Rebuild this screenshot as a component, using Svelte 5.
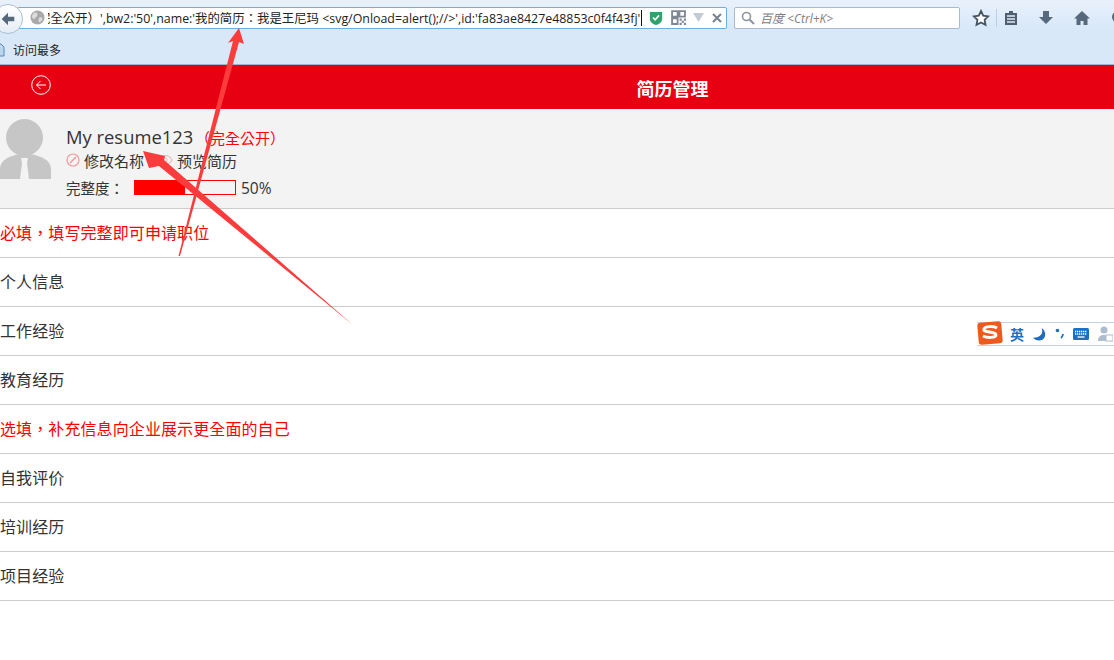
<script>
  const required = ['个人信息', '工作经验', '教育经历'];
  const optional = ['自我评价', '培训经历', '项目经验'];
  let percent = 50;
</script>

<div class="page">
  <div class="browser">
    <div class="toolbar">
      <div class="back">
        <svg viewBox="0 0 20 20" width="18" height="18"><path d="M10 3 3 10l7 7v-4.500h7v-5h-7z" fill="#55687c"/></svg>
      </div>
      <div class="urlbar">
        <svg class="globe" viewBox="0 0 16 16" width="15" height="15"><circle cx="8" cy="8" r="7.500" fill="#a9a9a9"/><path d="M4 3c2-1 4 0 4 2S6 7 5 9 2 8 2 6zM10 8c2-1 4 0 3 2s-2 3-3 3-1-4 0-5z" fill="#dcdcdc"/></svg>
        <div class="url"><span>完全公开）',bw2:'50',name:'我的简历：我是王尼玛 &lt;svg/Onload=alert();//&gt;',id:'fa83ae8427e48853c0f4f43fj'</span></div>
        <i class="caret"></i>
        <svg class="shield" viewBox="0 0 16 18" width="14" height="16"><path d="M1 2h14v8c0 4-4 6-7 7-3-1-7-3-7-7z" fill="#2fa36b"/><path d="M4.500 8.500 7 11l4.500-5" stroke="#fff" stroke-width="1.800" fill="none"/></svg>
        <svg class="qr" viewBox="0 0 14 14" width="15" height="15"><path d="M0 0h6v6H0zM8 0h6v6H8zM0 8h6v6H0z" fill="none" stroke="#7d8894" stroke-width="2" transform="translate(1 1) scale(.86)"/><path d="M8 8h2v2H8zM12 8h2v2h-2zM10 10h2v2h-2zM8 12h2v2H8zM12 12h2v2h-2z" fill="#7d8894"/></svg>
        <svg class="drop" viewBox="0 0 10 8" width="11" height="9"><path d="M0 0h10L5 8z" fill="#c3ccd5"/></svg>
        <svg class="close" viewBox="0 0 10 10" width="10" height="10"><path d="m1 1 8 8M9 1 1 9" stroke="#76828f" stroke-width="2"/></svg>
      </div>
      <div class="search">
        <svg viewBox="0 0 14 14" width="14" height="14"><circle cx="5.500" cy="5.500" r="4" fill="none" stroke="#8d959e" stroke-width="1.600"/><path d="m8.500 8.500 4.500 4.500" stroke="#8d959e" stroke-width="2"/></svg>
        <span>百度 &lt;Ctrl+K&gt;</span>
      </div>
      <div class="tools">
        <svg viewBox="0 0 18 18" width="18" height="18"><path d="m9 2 2.200 4.600 5 .7-3.600 3.500.9 5L9 13.400 4.500 15.800l.9-5L1.800 7.300l5-.7z" fill="#fff" stroke="#45525f" stroke-width="1.800"/></svg>
        <i class="sep"></i>
        <svg viewBox="0 0 16 16" width="16" height="16"><path d="M2 3h12v12H2z" fill="#4f5f6f"/><path d="M6 1h4v3H6z" fill="#4f5f6f"/><path d="M4 6h8M4 9h8M4 12h8" stroke="#dfeaf6" stroke-width="1.300"/></svg>
        <svg class="gap-l" viewBox="0 0 16 16" width="16" height="16"><path d="M5 1h6v6h4l-7 7-7-7h4z" fill="#55687c"/></svg>
        <svg class="gap-l" viewBox="0 0 18 16" width="18" height="16"><path d="M9 1 1 8.500h2.500V15h4v-4h3v4h4V8.500H17z" fill="#55687c"/></svg>
        <svg class="gap-l" viewBox="0 0 16 16" width="16" height="16"><circle cx="8" cy="7" r="6" fill="#55687c"/><path d="M5 12v4l4-3z" fill="#55687c"/></svg>
      </div>
    </div>
    <div class="bookmarks">
      <svg viewBox="0 0 12 14" width="12" height="14"><path d="M0 1h7l3 3v9H0z" fill="#bcd6ee" stroke="#5b87b3"/></svg>
      <span>访问最多</span>
    </div>
  </div>

  <header class="title">
    <svg class="return" viewBox="0 0 20 20" width="20" height="20"><circle cx="10" cy="10" r="9.300" fill="none" stroke="#fff" stroke-width="1"/><path d="M15 10H5.500M9.500 6l-4 4 4 4" fill="none" stroke="#fff" stroke-width="1"/></svg>
    <h1>简历管理</h1>
  </header>

  <section class="profile">
    <svg class="avatar" viewBox="0 0 52 60" width="52" height="60">
      <circle cx="24.500" cy="18.500" r="18.500" fill="#c6c6c6"/>
      <path d="M0 60V50c0-9 9-13 20-15h10c11 2 21 6 21 15v10z" fill="#c6c6c6"/>
      <path d="M21 39h7l-1 5 2 16h-9l2-16z" fill="#f3f3f3"/>
    </svg>
    <div class="info">
      <div class="name">My resume123 <span class="public">（完全公开）</span></div>
      <div class="actions">
        <span class="action">
          <svg viewBox="0 0 14 14" width="14" height="14"><circle cx="7" cy="7" r="6" fill="none" stroke="#f29a9a" stroke-width="1.200"/><path d="m4 10 6-6" stroke="#f29a9a" stroke-width="1.500"/></svg>
          修改名称
        </span>
        <span class="action">
          <svg viewBox="0 0 16 12" width="16" height="12"><path d="M1 6c3-6 11-6 14 0-3 6-11 6-14 0z" fill="none" stroke="#f0b8b8" stroke-width="1.200"/><circle cx="8" cy="6" r="2.200" fill="none" stroke="#f0b8b8"/></svg>
          预览简历
        </span>
      </div>
      <div class="progress">
        <span class="label">完整度：</span>
        <div class="bar"><div class="fill" style="width: {percent}%"></div></div>
        <span class="percent">{percent}%</span>
      </div>
    </div>
  </section>

  <div class="row notice">必填，填写完整即可申请职位</div>
  {#each required as item}
    <div class="row">{item}</div>
  {/each}
  <div class="row notice">选填，补充信息向企业展示更全面的自己</div>
  {#each optional as item}
    <div class="row">{item}</div>
  {/each}

  <div class="ime">
    <svg class="ime-logo" viewBox="0 0 28 26" width="28" height="26">
      <rect x="2" y="2" width="24" height="22" rx="3" fill="#ee5a1e" transform="rotate(-5 14 13)"/>
      <path d="M21 8c-3-2-12-2-13 1-1 4 12 2 12 6 0 3-9 3-13 1" fill="none" stroke="#fff" stroke-width="3"/>
    </svg>
    <span class="ime-text">英</span>
    <svg viewBox="0 0 14 14" width="15" height="15"><path d="M9 1c2 5-1 9-8 9 2 3 9 4 11-1 1-3 0-6-3-8z" fill="#1e6fc0"/></svg>
    <svg viewBox="0 0 10 14" width="10" height="14"><circle cx="2.500" cy="3.500" r="1.800" fill="#1e6fc0"/><path d="M8 7c0 2-1 3-2 4" stroke="#1e6fc0" stroke-width="1.800" fill="none"/></svg>
    <svg viewBox="0 0 16 12" width="16" height="12"><rect width="16" height="12" rx="1.500" fill="#1e6fc0"/><path d="M2 3.500h12M2 6h12" stroke="#fff" stroke-width="1.500" stroke-dasharray="1.300 .7"/><path d="M4.500 9h7" stroke="#fff" stroke-width="1.300"/></svg>
    <svg viewBox="0 0 16 16" width="16" height="16"><circle cx="7" cy="4" r="3.500" fill="#aebccd"/><path d="M1 15c0-5 3-6 6-6s4 1 4 2v4z" fill="#aebccd"/><rect x="9" y="9" width="7" height="6" fill="#fff" stroke="#aebccd"/></svg>
  </div>

  <!-- annotations drawn on top of the shot -->
  <svg class="marks" viewBox="0 0 1114 660" width="1114" height="660">
    <path d="M178.500 256 233 41l-5 2 11-15 5 16-5-2L180 256z" fill="#fb3c3c"/>
    <path d="M353 325 159 166l-10 2-6-17 22 5-1 4z" fill="#fb3c3c"/>
  </svg>
</div>

<style>
  :global(body) {
    margin: 0;
    background: #fff;
  }

  .page {
    position: relative;
    width: 1114px;
    height: 660px;
    overflow: hidden;
    font-family: "Open Sans", "Noto Sans CJK TC", sans-serif;
    color: #333;
  }

  .browser {
    height: 64px;
    border-bottom: 1px solid #9fb4c8;
    background: linear-gradient(#e9f1fb, #d8e8f8 45%);
  }

  .toolbar {
    display: flex;
    align-items: center;
    height: 36px;
  }

  .back {
    flex: none;
    display: flex;
    align-items: center;
    justify-content: center;
    width: 28px;
    height: 28px;
    margin: 1px -6px 0 -7px;
    border: 1px solid #a9bfd4;
    border-radius: 50%;
    background: linear-gradient(#fff, #e6edf5);
    position: relative;
    z-index: 1;
  }

  .urlbar {
    flex: none;
    display: flex;
    align-items: center;
    width: 710px;
    height: 22px;
    margin-top: -1px;
    padding-left: 12px;
    box-sizing: border-box;
    border: 1px solid #68b0ec;
    border-radius: 2px;
    background: #fff;
    font-size: 12.4px;
    color: #222;
    overflow: hidden;
  }

  .globe { flex: none; margin-right: 3px; }

  .url {
    flex: none;
    width: 593px;
    white-space: nowrap;
    overflow: hidden;
  }

  .url span { margin-left: -10px; }

  .caret {
    flex: none;
    width: 1px;
    height: 16px;
    background: #111;
    margin-right: 7px;
  }

  .shield { flex: none; margin-right: 8px; }
  .qr { flex: none; margin-right: 7px; }
  .drop { flex: none; margin-right: 8px; }
  .close { flex: none; }

  .search {
    flex: none;
    display: flex;
    align-items: center;
    gap: 5px;
    width: 226px;
    height: 22px;
    margin: -1px 0 0 7px;
    padding-left: 6px;
    box-sizing: border-box;
    border: 1px solid #a9bbd0;
    border-radius: 2px;
    background: #fff;
    font-size: 12px;
    font-style: italic;
    color: #808080;
  }

  .tools {
    flex: none;
    display: flex;
    align-items: center;
    margin-left: 12px;
  }

  .sep {
    width: 1px;
    height: 18px;
    margin: 0 6px 0 6px;
    background: #bccfe2;
  }

  .gap-l { margin-left: 19px; }

  .bookmarks {
    display: flex;
    align-items: center;
    gap: 7px;
    height: 28px;
    margin-left: -6px;
    font-size: 12px;
    color: #222;
  }

  .title {
    position: relative;
    display: flex;
    align-items: center;
    justify-content: center;
    height: 44px;
    background: #e60012;
  }

  .return {
    position: absolute;
    left: 31px;
    top: 10px;
  }

  h1 {
    margin: 2px 0 0 231px;
    font-size: 18px;
    font-weight: 700;
    color: #fff;
  }

  .profile {
    display: flex;
    height: 100px;
    box-sizing: border-box;
    background: #f3f3f3;
    border-bottom: 1px solid #ccc;
  }

  .avatar {
    flex: none;
    margin: 10px 14px 0 0;
  }

  .info {
    padding-top: 14px;
  }

  .name {
    height: 28px;
    font-size: 18.4px;
    line-height: 28px;
  }

  .public {
    margin-left: -3px;
    font-size: 15px;
    color: #f00;
  }

  .actions {
    display: flex;
    gap: 13px;
    font-size: 15px;
    height: 24px;
    margin-top: -3px;
    align-items: center;
  }

  .action {
    display: flex;
    align-items: center;
    gap: 4px;
  }

  .progress {
    display: flex;
    align-items: center;
    height: 31px;
    font-size: 14.500px;
  }

  .label { width: 68px; }

  .percent { font-size: 15.500px; }

  .bar {
    width: 102px;
    height: 15px;
    box-sizing: border-box;
    border: 1px solid #f00;
    margin-right: 5px;
  }

  .fill {
    height: 100%;
    background: #f00;
  }

  .row {
    height: 49px;
    box-sizing: border-box;
    border-bottom: 1px solid #ccc;
    padding-top: 1px;
    line-height: 47px;
    font-size: 16px;
    letter-spacing: .1px;
  }

  .notice { color: #f00; }

  .ime {
    position: absolute;
    left: 977px;
    top: 322px;
    display: flex;
    align-items: center;
    gap: 8px;
    width: 160px;
    height: 24px;
    box-sizing: border-box;
    background: #fff;
    border-top: 1px solid #c5d3e0;
    border-bottom: 1px solid #c5d3e0;
  }

  .ime-logo { margin: -3px -2px 0 -1px; }

  .ime-text {
    font-size: 14px;
    font-weight: 700;
    color: #1e6fc0;
  }

  .marks {
    position: absolute;
    left: 0;
    top: 0;
    pointer-events: none;
  }
</style>
